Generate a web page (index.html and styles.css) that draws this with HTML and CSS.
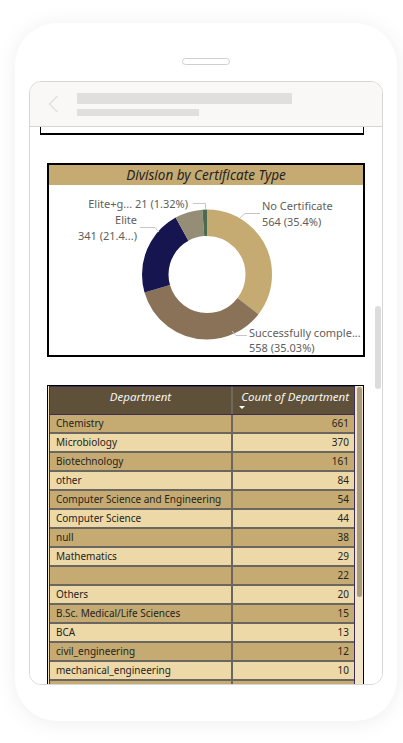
FILE: index.html
```html
<!DOCTYPE html>
<html>
<head>
<meta charset="utf-8">
<link rel="stylesheet" href="styles.css">
</head>
<body>
<div class="phone">
  <div class="speaker"></div>
  <div class="screen">
    <div class="topbar">
      <svg class="back" width="11" height="18" viewBox="0 0 11 18"><polyline points="9.5,1 1.5,9 9.5,17" fill="none" stroke="#e3dfdf" stroke-width="1.3"/></svg>
      <div class="titles">
        <div class="bar1"></div>
        <div class="bar2"></div>
      </div>
    </div>
    <div class="content">
      <div class="prev-card"></div>

      <div class="donut-card">
        <div class="card-title">Division by Certificate Type</div>
        <svg class="donut" width="314" height="170" viewBox="0 0 314 170">
          <g transform="rotate(-90 158 89.5)" fill="none" stroke-width="26.5">
            <circle cx="158" cy="89.5" r="51.75" stroke="#c5aa71" stroke-dasharray="115.10 325.15" stroke-dashoffset="0"/>
            <circle cx="158" cy="89.5" r="51.75" stroke="#8a7259" stroke-dasharray="113.90 325.15" stroke-dashoffset="-115.10"/>
            <circle cx="158" cy="89.5" r="51.75" stroke="#17154f" stroke-dasharray="69.58 325.15" stroke-dashoffset="-229.00"/>
            <circle cx="158" cy="89.5" r="51.75" stroke="#958d76" stroke-dasharray="22.27 325.15" stroke-dashoffset="-298.58"/>
            <circle cx="158" cy="89.5" r="51.75" stroke="#4b6a50" stroke-dasharray="4.29 325.15" stroke-dashoffset="-320.86"/>
          </g>
          <g class="leaders" fill="none" stroke="#c8c6c4" stroke-width="1">
            <polyline points="144,18.5 156.5,18.5 156.5,24"/>
            <polyline points="91,42.5 106,42.5 110,47"/>
            <polyline points="211,28.5 196,28.5 191,33"/>
            <polyline points="183,146 187,150.5 198,150.5"/>
          </g>
          <g class="labels">
            <text x="139" y="23" text-anchor="end">Elite+g... 21 (1.32%)</text>
            <text x="88" y="39" text-anchor="end">Elite</text>
            <text x="88" y="55" text-anchor="end">341 (21.4...)</text>
            <text x="213" y="25">No Certificate</text>
            <text x="213" y="41">564 (35.4%)</text>
            <text x="200" y="152">Successfully comple...</text>
            <text x="200" y="166.5">558 (35.03%)</text>
          </g>
        </svg>
      </div>

      <div class="table-card">
        <div class="tbl">
          <div class="thead">
            <div class="th th1">Department</div>
            <div class="th th2"><span>Count of Department</span><div class="sort"></div></div>
          </div>
          <div class="row odd"><div class="c1">Chemistry</div><div class="c2">661</div></div>
          <div class="row even"><div class="c1">Microbiology</div><div class="c2">370</div></div>
          <div class="row odd"><div class="c1">Biotechnology</div><div class="c2">161</div></div>
          <div class="row even"><div class="c1">other</div><div class="c2">84</div></div>
          <div class="row odd"><div class="c1">Computer Science and Engineering</div><div class="c2">54</div></div>
          <div class="row even"><div class="c1">Computer Science</div><div class="c2">44</div></div>
          <div class="row odd"><div class="c1">null</div><div class="c2">38</div></div>
          <div class="row even"><div class="c1">Mathematics</div><div class="c2">29</div></div>
          <div class="row odd"><div class="c1"></div><div class="c2">22</div></div>
          <div class="row even"><div class="c1">Others</div><div class="c2">20</div></div>
          <div class="row odd"><div class="c1">B.Sc. Medical/Life Sciences</div><div class="c2">15</div></div>
          <div class="row even"><div class="c1">BCA</div><div class="c2">13</div></div>
          <div class="row odd"><div class="c1">civil_engineering</div><div class="c2">12</div></div>
          <div class="row even"><div class="c1">mechanical_engineering</div><div class="c2">10</div></div>
          <div class="row odd"><div class="c1"></div><div class="c2"></div></div>
          <div class="row even"><div class="c1"></div><div class="c2"></div></div>
        </div>
        <div class="vscroll"><div class="thumb"></div></div>
      </div>

      <div class="page-scroll"></div>
    </div>
  </div>
</div>
</body>
</html>
```
FILE: styles.css
```css
html, body {
  margin: 0;
  padding: 0;
  background: #ffffff;
}
body {
  font-family: "Noto Sans", "Open Sans", sans-serif;
  width: 403px;
  height: 743px;
  overflow: hidden;
}
.phone {
  width: 382px;
  height: 698px;
  margin: 23px 0 0 15px;
  background: #fff;
  border-radius: 42px;
  box-shadow: 0 2px 22px rgba(0, 0, 0, 0.07);
  display: flex;
  flex-direction: column;
  align-items: center;
}
.speaker {
  width: 46px;
  height: 5px;
  border: 1px solid #cfcfcf;
  border-radius: 4px;
  margin-top: 35px;
  box-sizing: content-box;
}
.screen {
  width: 352px;
  height: 602px;
  margin-top: 16px;
  border: 1px solid #d6d6d6;
  border-radius: 12px;
  overflow: hidden;
  display: flex;
  flex-direction: column;
  background: #fff;
}
.topbar {
  flex-shrink: 0;
  height: 44px;
  background: #f9f8f7;
  border-bottom: 1px solid #d6d6d6;
  display: flex;
  align-items: center;
  padding-left: 18px;
  gap: 18px;
}
.back {
  display: block;
}
.titles {
  display: flex;
  flex-direction: column;
  gap: 5px;
  padding-top: 1px;
}
.bar1 {
  width: 215px;
  height: 11px;
  background: #e1dfdd;
}
.bar2 {
  width: 122px;
  height: 7px;
  background: #e1dfdd;
}
.content {
  flex: 1;
  position: relative;
  overflow: hidden;
  background: #fff;
}
.prev-card {
  margin-left: 10px;
  width: 322px;
  height: 6px;
  border: 1px solid #000;
  border-top: none;
  border-bottom-width: 2px;
}
.donut-card {
  margin: 28px 0 0 17px;
  width: 314px;
  border: 2px solid #000;
}
.card-title {
  height: 20px;
  line-height: 20px;
  background: #c5aa71;
  text-align: center;
  font-style: italic;
  font-size: 13.5px;
  color: #252423;
}
.donut {
  display: block;
}
.labels text {
  font-family: "Noto Sans", "Open Sans", sans-serif;
  font-size: 11px;
  fill: #605e5c;
}
.table-card {
  margin: 28px 0 0 17px;
  width: 314px;
  border: 1px solid #000;
  padding-left: 1px;
  background: #f3e5c6;
  display: flex;
  align-items: flex-start;
}
.tbl {
  width: 304px;
  border: 1px solid #3b2e57;
  border-bottom: none;
  flex-shrink: 0;
}
.thead {
  display: grid;
  grid-template-columns: 183px 121px;
  height: 27px;
  background: #5f5139;
  border-bottom: 1px solid #3b2e57;
}
.th {
  color: #f4f4f4;
  font-style: italic;
  font-size: 11.5px;
  line-height: 20px;
}
.th1 {
  text-align: center;
  border-right: 2px solid #6e6a62;
}
.th2 {
  padding: 0 5px 0 6px;
  text-align: right;
  display: flex;
  flex-direction: column;
  align-items: flex-end;
}
.sort {
  align-self: flex-start;
  width: 0;
  height: 0;
  border-left: 3px solid transparent;
  border-right: 3px solid transparent;
  border-top: 3px solid #ffffff;
  margin-top: -1px;
}
.row {
  display: grid;
  grid-template-columns: 183px 121px;
  height: 17px;
  line-height: 17px;
  border-bottom: 2px solid #6b6760;
  font-size: 10px;
  color: #252423;
}
.row.odd {
  background: #c5aa71;
}
.row.even {
  background: #edd8a7;
}
.c1 {
  padding-left: 6px;
  border-right: 2px solid #6b6760;
  white-space: nowrap;
  overflow: hidden;
}
.c2 {
  text-align: right;
  padding-right: 5px;
}
.vscroll {
  width: 8px;
  flex-shrink: 0;
}
.thumb {
  margin: 1px 0 0 2px;
  width: 5px;
  height: 210px;
  background: #a99b7b;
  border-radius: 3px;
}
.page-scroll {
  position: absolute;
  left: 345px;
  top: 179px;
  width: 6px;
  height: 83px;
  background: #dcdcdc;
  border-radius: 3px;
}
```
